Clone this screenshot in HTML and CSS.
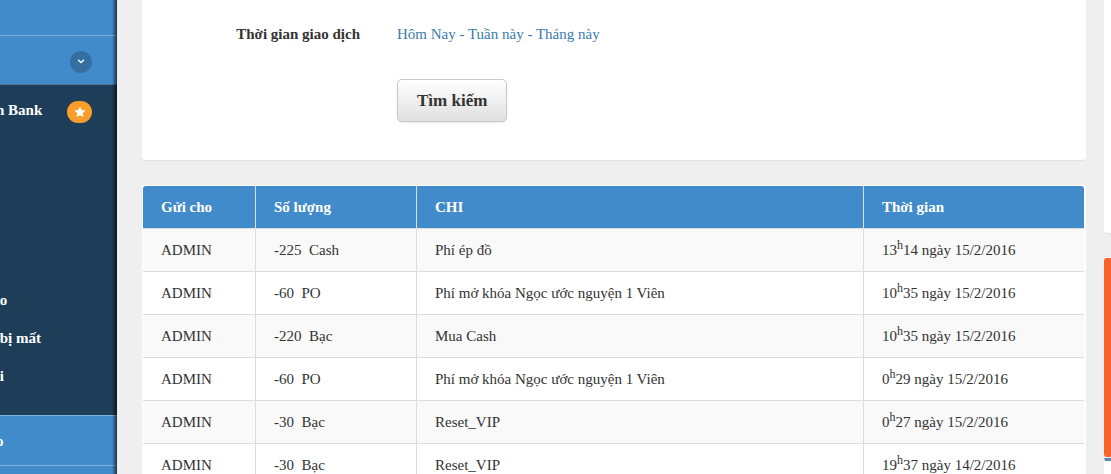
FILE: index.html
```html
<!DOCTYPE html>
<html lang="vi">
<head>
    <meta charset="utf-8">
    <title>Lịch sử giao dịch</title>
    <link rel="stylesheet" href="styles.css">
</head>
<body>
    <div class="page">
        <!-- Menu -->
        <nav class="sidebar">
            <div class="menu-item menu-top"></div>
            <div class="menu-item menu-open">
                <button type="button" class="toggle" aria-label="Menu">
                    <svg width="8" height="5" viewBox="0 0 8 5"><path d="M1 .8 L4 3.6 L7 .8" fill="none" stroke="#fff" stroke-width="1.3"/></svg>
                </button>
            </div>
            <ul class="submenu">
                <li>
                    <a href="#">n Bank</a>
                    <span class="badge">
                        <svg width="12" height="12" viewBox="0 0 12 12"><path d="M6 .5 L7.7 4 L11.5 4.5 L8.7 7.2 L9.4 11 L6 9.2 L2.6 11 L3.3 7.2 L.5 4.5 L4.3 4 Z" fill="#fff"/></svg>
                    </span>
                </li>
                <li></li>
                <li></li>
                <li></li>
                <li></li>
                <li><a href="#">&nbsp;o</a></li>
                <li><a href="#">&nbsp;bị mất</a></li>
                <li><a href="#">&nbsp;i</a></li>
            </ul>
            <div class="menu-item"><a href="#">o</a></div>
            <div class="menu-item"></div>
        </nav>

        <main class="content">
            <!-- Tìm kiếm -->
            <form class="panel search">
                <div class="form-row">
                    <span class="form-label">Thời gian giao dịch</span>
                    <div><a href="#">Hôm Nay</a> - <a href="#">Tuần này</a> - <a href="#">Tháng này</a></div>
                </div>
                <div class="form-row">
                    <button type="submit" class="btn">Tìm kiếm</button>
                </div>
            </form>

            <!-- Danh sách giao dịch -->
            <div class="panel table-box">
                <table>
                    <thead>
                        <tr><th class="col-to">Gửi cho</th><th class="col-amount">Số lượng</th><th class="col-note">CHI</th><th>Thời gian</th></tr>
                    </thead>
                    <tbody>
                        <tr><td>ADMIN</td><td>-225 &nbsp;Cash</td><td>Phí ép đồ</td><td>13<sup>h</sup>14 ngày 15/2/2016</td></tr>
                        <tr><td>ADMIN</td><td>-60 &nbsp;PO</td><td>Phí mở khóa Ngọc ước nguyện 1 Viên</td><td>10<sup>h</sup>35 ngày 15/2/2016</td></tr>
                        <tr><td>ADMIN</td><td>-220 &nbsp;Bạc</td><td>Mua Cash</td><td>10<sup>h</sup>35 ngày 15/2/2016</td></tr>
                        <tr><td>ADMIN</td><td>-60 &nbsp;PO</td><td>Phí mở khóa Ngọc ước nguyện 1 Viên</td><td>0<sup>h</sup>29 ngày 15/2/2016</td></tr>
                        <tr><td>ADMIN</td><td>-30 &nbsp;Bạc</td><td>Reset_VIP</td><td>0<sup>h</sup>27 ngày 15/2/2016</td></tr>
                        <tr><td>ADMIN</td><td>-30 &nbsp;Bạc</td><td>Reset_VIP</td><td>19<sup>h</sup>37 ngày 14/2/2016</td></tr>
                    </tbody>
                </table>
            </div>
        </main>

        <aside class="side">
            <div class="panel side-top"></div>
            <div class="side-banner"></div>
            <div class="side-box"></div>
        </aside>
    </div>
</body>
</html>
```
FILE: styles.css
```css
* {
    box-sizing: border-box;
}

body {
    margin: 0;
    background: #efefef;
    color: #333;
    font-family: "Liberation Serif", "Times New Roman", serif;
    font-size: 15px;
    line-height: 20px;
}

a {
    color: inherit;
    text-decoration: none;
}

.page {
    display: flex;
    height: 100vh;
    overflow: hidden;
}

/* Menu */
.sidebar {
    position: relative;
    flex: 0 0 117px;
    background: #428bca;
    overflow: hidden;
}

.sidebar::after {
    content: "";
    position: absolute;
    top: 0;
    right: 0;
    bottom: 0;
    width: 5px;
    background: linear-gradient(to right, rgba(0, 0, 0, 0), rgba(0, 0, 0, 0.65));
}

.sidebar a {
    margin-left: -4px;
    color: #fff;
    font-weight: bold;
    white-space: nowrap;
}

.menu-item {
    display: flex;
    align-items: center;
    height: 50px;
    padding-right: 25px;
    border-top: 1px solid #7fb1dc;
}

.menu-top {
    height: 35px;
    border-top: none;
}

.menu-open {
    justify-content: flex-end;
    padding-top: 3px;
    border-bottom: 1px solid #4a7698;
}

.toggle {
    display: flex;
    align-items: center;
    justify-content: center;
    width: 22px;
    height: 22px;
    padding: 0;
    border: none;
    border-radius: 50%;
    background: #356fa2;
}

.submenu {
    margin: 0;
    padding: 6px 0 20px;
    list-style: none;
    background: #1d3d59;
}

.submenu li {
    display: flex;
    align-items: center;
    justify-content: space-between;
    height: 38px;
    padding-right: 25px;
}

.badge {
    display: flex;
    align-items: center;
    justify-content: center;
    width: 25px;
    height: 22px;
    margin-top: 4px;
    border-radius: 11px;
    background: #fb9d29;
}

/* Nội dung */
.content {
    flex: 1;
    margin: 0 18px 0 25px;
}

.panel {
    background: #fff;
    border-radius: 3px;
    box-shadow: 0 1px 1px rgba(0, 0, 0, 0.06);
}

.search {
    height: 160px;
    padding-top: 24px;
    border-radius: 0 0 3px 3px;
}

.form-row {
    display: grid;
    grid-template-columns: 218px 1fr;
    gap: 37px;
    margin-bottom: 35px;
    color: #3a7aae;
}

.form-label {
    color: #333;
    font-weight: bold;
    text-align: right;
}

.btn {
    grid-column: 2;
    justify-self: start;
    height: 43px;
    padding: 0 19px;
    border: 1px solid #c8c8c8;
    border-radius: 5px;
    background: linear-gradient(#fff, #e0e0e0);
    box-shadow: 0 1px 2px rgba(0, 0, 0, 0.1);
    color: #333;
    font-family: inherit;
    font-size: 17px;
    font-weight: bold;
}

/* Bảng */
.table-box {
    margin-top: 25px;
    padding: 1px 2px 1px 1px;
}

table {
    width: 100%;
    border-collapse: separate;
    border-spacing: 0;
    table-layout: fixed;
}

th,
td {
    height: 43px;
    padding: 0 18px;
    border-bottom: 1px solid #ddd;
    border-left: 1px solid #ddd;
    text-align: left;
}

th:first-child,
td:first-child {
    border-left: none;
}

th {
    background: #428bca;
    border-left-color: #ddd;
    color: #fff;
}

th:first-child {
    border-top-left-radius: 3px;
}

th:last-child {
    border-top-right-radius: 3px;
}

tbody tr:nth-child(odd) {
    background: #f9f9f9;
}

sup {
    font-size: 12px;
    line-height: 0;
}

.col-to {
    width: 112px;
}

.col-amount {
    width: 161px;
}

.col-note {
    width: 47.5%;
}

/* Cột phải */
.side {
    flex: 0 0 7px;
}

.side-top {
    height: 233px;
    border-radius: 0 0 0 3px;
}

.side-banner {
    height: 199px;
    margin-top: 25px;
    border-radius: 3px 0 0 3px;
    background: #fa612d;
}

.side-box {
    height: 60px;
    margin-top: 1px;
    border-top: 3px solid #5c87b0;
    border-left: 1px solid #fff;
    background: #fff;
}
```
